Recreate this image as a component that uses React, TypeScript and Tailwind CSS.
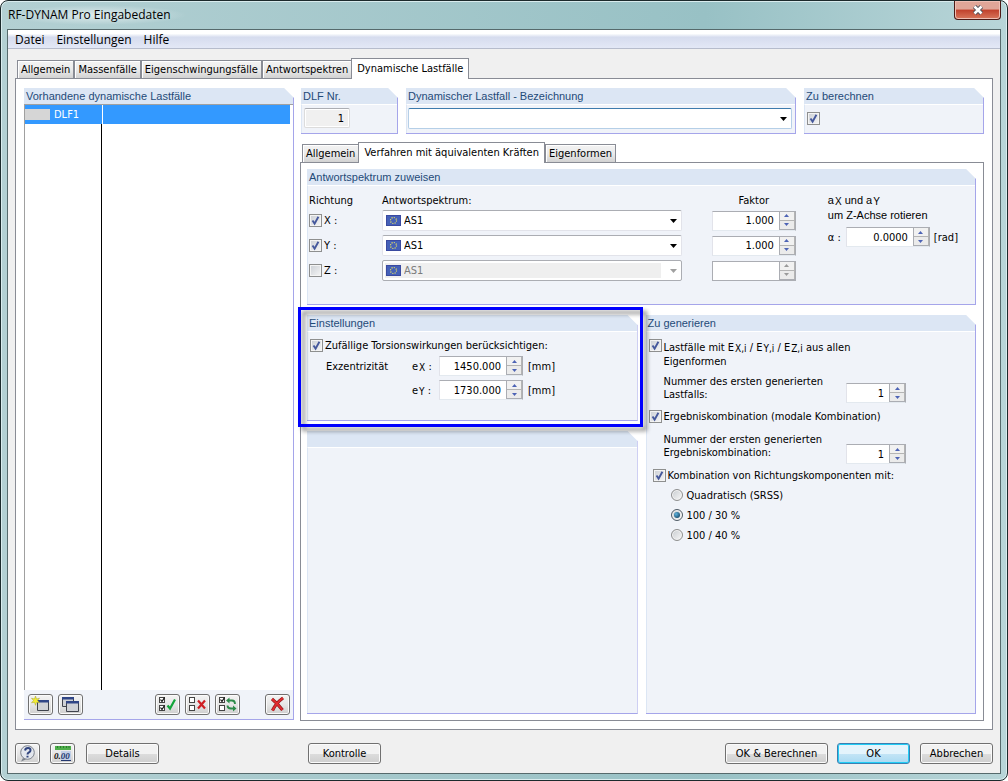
import { useState } from 'react';
import type { ReactNode } from 'react';
import clsx from 'clsx';

const MAIN_TABS = ['Allgemein', 'Massenfälle', 'Eigenschwingungsfälle', 'Antwortspektren', 'Dynamische Lastfälle'];
const SUB_TABS = ['Allgemein', 'Verfahren mit äquivalenten Kräften', 'Eigenformen'];

function Group({ title, flush, className, bodyClassName, children }: {
  title: string;
  flush?: boolean;
  className?: string;
  bodyClassName?: string;
  children?: ReactNode;
}) {
  return (
    <section
      className={clsx(
        'flex flex-col border-r border-b border-[#a5a5ea] bg-[#f0f3f9] [clip-path:polygon(0_0,calc(100%-10px)_0,100%_10px,100%_100%,0_100%)]',
        className,
      )}
    >
      <h2 className="h-4 shrink-0 bg-[#dce6f4] pl-0.5 font-['Liberation_Sans',Arial,sans-serif] text-[11px] leading-4 text-[#1f4a78]">
        {title}
      </h2>
      <div className={clsx('flex-1', !flush && 'border-t border-l border-t-white border-l-[#dce6f4]', bodyClassName)}>
        {children}
      </div>
    </section>
  );
}

function Tabs({ tabs, active, onSelect }: { tabs: string[]; active: string; onSelect: (tab: string) => void }) {
  return (
    <div role="tablist" className="ml-0.5 flex items-end">
      {tabs.map((tab) => (
        <button
          key={tab}
          type="button"
          role="tab"
          aria-selected={tab === active}
          onClick={() => onSelect(tab)}
          className={clsx(
            'border border-b-0 border-[#898c95] whitespace-nowrap',
            tab === active
              ? 'relative -mb-px -ml-px h-[21px] bg-white px-[5px] pb-0.5'
              : 'h-[18px] bg-linear-to-b from-[#f3f3f3] via-[#ebebeb] to-[#d2d2d2] px-[3px] shadow-[inset_1px_1px_0_#fff]',
          )}
        >
          {tab}
        </button>
      ))}
    </div>
  );
}

function Sub({ children }: { children: ReactNode }) {
  return <sub className="-bottom-px ml-px text-[10px]">{children}</sub>;
}

function Checkbox({ label, defaultChecked, children }: {
  label?: string;
  defaultChecked?: boolean;
  children?: ReactNode;
}) {
  return (
    <label className="flex items-start gap-0.5">
      <span className="grid shrink-0">
        <input
          type="checkbox"
          aria-label={label}
          defaultChecked={defaultChecked}
          className="peer col-start-1 row-start-1 size-[13px] appearance-none border border-[#8e8f8f] bg-linear-to-br from-[#cbcfd5] to-[#f6f6f6] shadow-[inset_0_0_0_1px_#f4f4f4]"
        />
        <svg
          viewBox="0 0 13 13"
          className="pointer-events-none invisible col-start-1 row-start-1 size-[13px] peer-checked:visible"
        >
          <path d="M3.5 6.5 5.6 9.6 9.4 2.8" fill="none" stroke="#45589c" strokeWidth="1.9" />
        </svg>
      </span>
      {children}
    </label>
  );
}

function Radio({ label, defaultChecked }: { label: string; defaultChecked?: boolean }) {
  return (
    <label className="flex h-3.5 items-center gap-1">
      <span className="grid">
        <input
          type="radio"
          name="richtung"
          defaultChecked={defaultChecked}
          className="peer col-start-1 row-start-1 size-3 appearance-none rounded-full border border-[#8e8f8f] bg-linear-to-br from-[#c8ccd0] to-[#f8f8f8] shadow-[inset_0_0_0_1px_#f4f4f4] checked:border-[#4f5b66]"
        />
        <span className="pointer-events-none invisible col-start-1 row-start-1 m-auto size-1.5 rounded-full bg-radial-[at_35%_35%] from-[#5fb4de] to-[#08304f] peer-checked:visible" />
      </span>
      {label}
    </label>
  );
}

function Spinner({ label, value, disabled, className }: {
  label: string;
  value: string;
  disabled?: boolean;
  className?: string;
}) {
  const arrow = disabled ? 'fill-[#9a9a9a]' : 'fill-[#4d63b5]';
  return (
    <span
      className={clsx(
        'flex h-5 shrink-0 border border-t-[#abadb3] border-r-[#abadb3] bg-white',
        disabled ? 'border-b-[#abadb3] border-l-[#abadb3]' : 'border-b-[#e3e9ef] border-l-[#e2e3ea]',
        className,
      )}
    >
      <input
        type="text"
        aria-label={label}
        defaultValue={value}
        disabled={disabled}
        className="w-0 min-w-0 flex-1 pr-[5px] text-right"
      />
      <span className="flex w-4 flex-col border-b border-l border-[#abadb3] bg-[#b4b4b4] pr-px">
        <button type="button" aria-label={`${label} erhöhen`} disabled={disabled} className="grid flex-1 place-items-center bg-[#f1f1f1]">
          <svg viewBox="0 0 5 3" className={clsx('h-[3px] w-[5px]', arrow)}>
            <path d="M0 3 2.5 0 5 3z" />
          </svg>
        </button>
        <span className="h-px" />
        <button type="button" aria-label={`${label} verringern`} disabled={disabled} className="grid flex-1 place-items-center bg-[#ebebeb]">
          <svg viewBox="0 0 5 3" className={clsx('h-[3px] w-[5px]', arrow)}>
            <path d="M0 0h5L2.5 3z" />
          </svg>
        </button>
      </span>
    </span>
  );
}

function EuFlag() {
  return (
    <svg viewBox="0 0 15 11" className="pointer-events-none col-start-1 row-start-1 ml-1 h-[11px] w-[15px] self-center">
      <rect width="15" height="11" fill="#3a4aa0" />
      <rect x="1" y="1" width="13" height="9" fill="#4460b8" />
      <circle cx="7.5" cy="5.5" r="3" fill="none" stroke="#f0e65a" strokeWidth="1.2" strokeDasharray="1.1 1.25" />
    </svg>
  );
}

function Combo({ label, options, flag, disabled, className }: {
  label: string;
  options: string[];
  flag?: boolean;
  disabled?: boolean;
  className?: string;
}) {
  return (
    <span className={clsx('grid h-[21px]', className)}>
      <select
        aria-label={label}
        disabled={disabled}
        className={clsx(
          'col-start-1 row-start-1 h-[21px] w-full appearance-none rounded-xs border pr-5',
          flag ? 'pl-[21px]' : 'pl-1',
          disabled && 'border-[#abadb3] bg-[#efefef] text-[#7b7b7b] opacity-100 shadow-[inset_0_0_0_2px_#fff,inset_-20px_0_0_#fff]',
          !disabled && flag && 'border-[#e2e3ea] border-t-[#abadb3] bg-white',
          !disabled && !flag && 'border-[#b5cfe7] border-t-[#3d7bad] bg-white',
        )}
      >
        {options.map((option) => (
          <option key={option}>{option}</option>
        ))}
      </select>
      {flag && <EuFlag />}
      <svg
        viewBox="0 0 7 4"
        className={clsx(
          'pointer-events-none col-start-1 row-start-1 mr-[5px] h-1 w-[7px] self-center justify-self-end',
          disabled ? 'fill-[#a0a0a0]' : 'fill-black',
        )}
      >
        <path d="M0 0h7L3.5 4z" />
      </svg>
    </span>
  );
}

function ToolButton({ label, children }: { label: string; children: ReactNode }) {
  return (
    <button
      type="button"
      aria-label={label}
      className="grid h-[21px] w-[25px] place-items-center rounded-[3px] border border-[#707070] bg-linear-to-b from-[#f4f4f4] via-[#e6e6e6] to-[#cfcfcf] shadow-[inset_0_0_0_1px_#fbfbfb]"
    >
      <svg viewBox="0 0 21 17" className="h-[17px] w-[21px]" fill="none">
        {children}
      </svg>
    </button>
  );
}

function PushButton({ primary, className, children }: { primary?: boolean; className?: string; children: ReactNode }) {
  return (
    <button
      type="button"
      className={clsx(
        'h-[21px] rounded-[3px] border text-center whitespace-nowrap',
        primary
          ? 'border-[#3c7fb1] bg-linear-to-b from-[#e4f4fc] from-50% via-[#c4e5f6] via-50% to-[#a9daf2] shadow-[inset_0_0_0_1px_#22cdf5]'
          : 'border-[#707070] bg-linear-to-b from-[#f2f2f2] from-50% via-[#dddddd] via-50% to-[#cfcfcf] shadow-[inset_0_0_0_1px_#fbfbfb]',
        className,
      )}
    >
      {children}
    </button>
  );
}

// Small square with an optional tick, shared by the list toolbar icons
function MiniBox({ y, checked }: { y: number; checked?: boolean }) {
  return (
    <>
      <rect x="2.5" y={y + 0.5} width="5" height="5" fill="#fff" stroke="#444" />
      {checked && <path d={`M3.5 ${y + 2.5}l1.5 2 2.5-4`} stroke="#111" strokeWidth="1.2" />}
    </>
  );
}

function LoadCaseList() {
  return (
    <Group
      title="Vorhandene dynamische Lastfälle"
      flush
      className="mb-px w-[270px] shrink-0"
      bodyClassName="flex flex-col"
    >
      <div className="flex flex-1 flex-col border-t border-l border-[#a0a0a0] bg-white">
        <table className="mr-[3px] border-collapse">
          <tbody>
            <tr className="h-[19px] bg-[#3399ff] text-white">
              <td className="w-[77px] border-r border-white p-0">
                <span className="flex items-center gap-1">
                  <span className="h-[11px] w-[25px] bg-[#d6d6d6]" />
                  DLF1
                </span>
              </td>
              <td className="p-0" />
            </tr>
          </tbody>
        </table>
        <div className="w-[77px] flex-1 border-r border-black" />
      </div>
      <div className="flex gap-[5px] py-1 pr-[3px] pl-1">
        <ToolButton label="Neu">
          <path d="M7.5 4.500h11v10h-11z" fill="#cfd1d6" stroke="#3f434c" />
          <path d="M7 4h12v2.500H7z" fill="#2f4586" />
          <path d="M5.500 0l1 3 3-.8-2 2.300 2 2.300-3-.5-1 3-1-3-3 .5 2-2.300-2-2.300 3 .8z" fill="#f4ee32" stroke="#a8a220" strokeWidth=".5" />
        </ToolButton>
        <ToolButton label="Kopieren">
          <path d="M2.500 1.500h11v9h-11z" fill="#cfd1d6" stroke="#3f434c" />
          <path d="M2 1h12v2.500H2z" fill="#2f4586" />
          <path d="M6.500 5.500h12v10h-12z" fill="#cfd1d6" stroke="#3f434c" />
          <path d="M6 5h13v2.500H6z" fill="#2f4586" />
        </ToolButton>
        <span className="flex-1" />
        <ToolButton label="Alle auswählen">
          <MiniBox y={1} checked />
          <MiniBox y={9} checked />
          <path d="M10.500 9.500l2.500 3 5-9" stroke="#12a53a" strokeWidth="2.200" />
        </ToolButton>
        <ToolButton label="Alle abwählen">
          <MiniBox y={1} />
          <MiniBox y={9} />
          <path d="M11 4.500l7 8M18 4.500l-7 8" stroke="#cf1f24" strokeWidth="2.200" />
        </ToolButton>
        <ToolButton label="Auswahl umkehren">
          <MiniBox y={1} checked />
          <MiniBox y={9} />
          <path d="M11 4.500h4q3 0 3 3.500M18 12.500h-4q-3.500 0-3.500-3" stroke="#2d8b4a" strokeWidth="1.800" />
          <path d="M12.500 1.500v6l-3.500-3zM16 9.500v6l3.500-3z" fill="#2d8b4a" />
        </ToolButton>
        <span className="w-[15px]" />
        <ToolButton label="Löschen">
          <path d="M5 3q5 4 10.500 11M16 2Q9 7 5.500 14.500" stroke="#8d1518" strokeWidth="3.200" />
          <path d="M5 3q5 4 10.500 11M16 2Q9 7 5.500 14.500" stroke="#e02c30" strokeWidth="2" />
        </ToolButton>
      </div>
    </Group>
  );
}

const DIRECTIONS = [
  { axis: 'X', factor: '1.000', active: true },
  { axis: 'Y', factor: '1.000', active: true },
  { axis: 'Z', factor: '', active: false },
];

function SpectrumGroup() {
  return (
    <Group title="Antwortspektrum zuweisen" className="h-[136px]" bodyClassName="flex justify-between pr-[17px]">
      <div className="mt-2 ml-px grid flex-1 grid-cols-[73px_minmax(0,1fr)_84px] content-start">
        <span className="h-3.5">Richtung</span>
        <span>Antwortspektrum:</span>
        <span className="text-center">Faktor</span>
        {DIRECTIONS.map(({ axis, factor, active }) => (
          <div key={axis} className="col-span-3 grid h-[25px] grid-cols-subgrid items-center">
            <Checkbox defaultChecked={active}>{axis} :</Checkbox>
            <Combo label={`Antwortspektrum ${axis}`} options={['AS1']} flag disabled={!active} className="mr-[30px]" />
            <Spinner label={`Faktor ${axis}`} value={factor} disabled={!active} />
          </div>
        ))}
      </div>
      <div className="mt-[7px] ml-8">
        <p className="font-['Liberation_Sans',Arial,sans-serif] leading-[15px]">
          a<Sub>X</Sub> und a<Sub>Y</Sub>
          <br />
          um Z-Achse rotieren
        </p>
        <div className="mt-1 flex items-center">
          <span className="w-[18px]">α :</span>
          <Spinner label="Winkel α" value="0.0000" className="w-[84px]" />
          <span className="ml-1">[rad]</span>
        </div>
      </div>
    </Group>
  );
}

function SettingsGroup() {
  return (
    <div className="relative">
      <Group title="Einstellungen" className="h-[106px]" bodyClassName="pt-[7px] pl-0.5">
        <Checkbox defaultChecked>Zufällige Torsionswirkungen berücksichtigen:</Checkbox>
        <div className="mt-1 ml-4 grid grid-cols-[86px_27px_84px_auto] items-center justify-start gap-y-1">
          <span>Exzentrizität</span>
          <span>
            e<Sub>X</Sub> :
          </span>
          <Spinner label="Exzentrizität eX" value="1450.000" />
          <span className="ml-[5px]">[mm]</span>
          <span className="col-start-2">
            e<Sub>Y</Sub> :
          </span>
          <Spinner label="Exzentrizität eY" value="1730.000" />
          <span className="ml-[5px]">[mm]</span>
        </div>
      </Group>
      <div className="pointer-events-none absolute -top-2 -right-[5px] -bottom-1.5 -left-[9px] z-10 border-3 border-[#0000ff] drop-shadow-[4px_4px_2px_rgba(0,0,0,0.45)]" />
    </div>
  );
}

function GenerateGroup() {
  return (
    <Group title="Zu generieren" bodyClassName="pt-[7px] pl-0.5">
      <Checkbox defaultChecked>
        <span className="mt-0.5 leading-[14px]">
          Lastfälle mit E<Sub>X,i</Sub> / E<Sub>Y,i</Sub> / E<Sub>Z,i</Sub> aus allen
          <br />
          Eigenformen
        </span>
      </Checkbox>
      <div className="mt-1.5 mr-[69px] ml-[15px] flex justify-between">
        <span>
          Nummer des ersten generierten
          <br />
          Lastfalls:
        </span>
        <Spinner label="Nummer des ersten generierten Lastfalls" value="1" className="mt-2 w-[60px]" />
      </div>
      <div className="mt-[7px]">
        <Checkbox defaultChecked>Ergebniskombination (modale Kombination)</Checkbox>
      </div>
      <div className="mt-2.5 mr-[69px] ml-[15px] flex justify-between">
        <span>
          Nummer der ersten generierten
          <br />
          Ergebniskombination:
        </span>
        <Spinner label="Nummer der ersten generierten Ergebniskombination" value="1" className="mt-[11px] w-[60px]" />
      </div>
      <div className="mt-[5px] ml-1">
        <Checkbox defaultChecked>Kombination von Richtungskomponenten mit:</Checkbox>
      </div>
      <div className="mt-1.5 ml-[22px] flex flex-col gap-1.5">
        <Radio label="Quadratisch (SRSS)" />
        <Radio label="100 / 30 %" defaultChecked />
        <Radio label="100 / 40 %" />
      </div>
    </Group>
  );
}

export default function App() {
  const [mainTab, setMainTab] = useState(MAIN_TABS[4]);
  const [subTab, setSubTab] = useState(SUB_TABS[1]);

  return (
    <div className="flex min-h-screen flex-col rounded-lg border border-[#1c2a2c] bg-linear-to-r from-[#b3d0d3] via-[#98c1c5] via-70% to-[#b8d5d8] px-1.5 pb-1.5 font-['DejaVu_Sans_Condensed','Noto_Sans',sans-serif] text-[11px] leading-[13px] text-black shadow-[inset_0_0_0_1px_#d9ecee]">
      <header className="flex h-7 items-start justify-between font-['Open_Sans',sans-serif]">
        <h1 className="mt-1 bg-radial-[closest-side] from-white/60 to-transparent pr-4 pl-px text-[12px] leading-5">
          RF-DYNAM Pro Eingabedaten
        </h1>
        <button
          type="button"
          aria-label="Schließen"
          className="grid h-[19px] w-[47px] place-items-center rounded-b-[4px] border border-t-0 border-[#4d1a16] bg-linear-to-b from-[#e0a698] from-45% via-[#c0402c] via-50% to-[#d8765c] shadow-[inset_0_0_0_1px_#eebfb4]"
        >
          <svg viewBox="0 0 12 10" className="h-2.5 w-3">
            <path d="M2.500 1.500 9.500 8.500M9.500 1.500 2.500 8.500" stroke="#50535c" strokeWidth="4.500" />
            <path d="M2.500 1.500 9.500 8.500M9.500 1.500 2.500 8.500" stroke="#fff" strokeWidth="2.500" />
          </svg>
        </button>
      </header>

      <div className="flex flex-1 flex-col border border-[#566a6c] bg-[#f0f0f0]">
        <nav className="flex h-[19px] items-center gap-3 border-b border-[#b6bccc] bg-linear-to-b from-white from-20% via-[#d6dcee] via-40% to-[#e3e8f6] px-[7px] font-['Open_Sans',sans-serif] text-[12px]">
          <button type="button">Datei</button>
          <button type="button">Einstellungen</button>
          <button type="button">Hilfe</button>
        </nav>

        <main className="flex flex-1 flex-col px-[7px] pt-[9px]">
          <Tabs tabs={MAIN_TABS} active={mainTab} onSelect={setMainTab} />
          <div className="flex flex-1 gap-1.5 border border-[#898c95] bg-white p-2 pt-[9px]">
            <LoadCaseList />
            <div className="flex min-w-0 flex-1 flex-col">
              <div className="ml-px grid grid-cols-[97px_minmax(0,1fr)_180px] gap-2">
                <Group title="DLF Nr." className="h-[46px]" bodyClassName="pt-[3px] pl-0.5">
                  <input
                    type="text"
                    aria-label="DLF Nr."
                    value="1"
                    readOnly
                    className="h-5 w-[46px] rounded-xs border border-[#dcdcdc] border-t-[#abadb3] bg-[#f0f0f0] pr-[5px] text-right shadow-[inset_0_0_0_1px_#fff]"
                  />
                </Group>
                <Group title="Dynamischer Lastfall - Bezeichnung" className="h-[46px]" bodyClassName="pt-[3px] pr-[3px] pl-px">
                  <Combo label="Bezeichnung" options={['']} />
                </Group>
                <Group title="Zu berechnen" className="h-[46px]" bodyClassName="pt-[7px] pl-0.5">
                  <Checkbox label="Zu berechnen" defaultChecked />
                </Group>
              </div>

              <div className="mt-2">
                <Tabs tabs={SUB_TABS} active={subTab} onSelect={setSubTab} />
              </div>
              <div className="flex flex-1 flex-col gap-2.5 border border-[#898c95] p-1.5 pr-[7px]">
                <SpectrumGroup />
                <div className="grid flex-1 grid-cols-2 gap-2">
                  <div className="flex flex-col gap-2.5">
                    <SettingsGroup />
                    <Group title="" className="flex-1" />
                  </div>
                  <GenerateGroup />
                </div>
              </div>
            </div>
          </div>
        </main>

        <footer className="flex items-center px-[7px] pt-[13px] pb-[9px]">
          <ToolButton label="Hilfe anzeigen">
            <circle cx="10.500" cy="7.500" r="6.800" fill="#e3e7ee" stroke="#7c828c" />
            <path d="M6 13l-2 3.500 5-2z" fill="#7c828c" />
            <path d="M8 5.500q.5-2.500 3-2.500t2.500 2.200q0 1.300-1.500 2.200t-1.500 2M10.500 10.800v1.800" stroke="#31457f" strokeWidth="2" />
          </ToolButton>
          <span className="w-2.5" />
          <ToolButton label="Einheiten und Dezimalstellen">
            <rect x="3" y="1" width="16" height="4" fill="#4fae4b" />
            <path d="M5.500 1v2M8.500 1v2M11.500 1v2M14.500 1v2M17 1v2" stroke="#23702a" strokeWidth=".8" />
            <path d="M9 6h10v10H9z" fill="#c3cfe6" />
            <text x="2" y="14" fontSize="9" fontWeight="bold" fontStyle="italic" fontFamily="Liberation Serif" fill="#111">
              0.
              <tspan fill="#24386f">00</tspan>
            </text>
            <path d="M9 15.500h10" stroke="#24386f" />
          </ToolButton>
          <PushButton className="ml-[11px] w-[73px]">Details</PushButton>
          <PushButton className="ml-[149px] w-[73px]">Kontrolle</PushButton>
          <span className="flex-1" />
          <PushButton className="w-[103px]">OK &amp; Berechnen</PushButton>
          <PushButton primary className="ml-[9px] w-[73px]">OK</PushButton>
          <PushButton className="ml-2.5 w-[73px]">Abbrechen</PushButton>
        </footer>
      </div>
    </div>
  );
}
